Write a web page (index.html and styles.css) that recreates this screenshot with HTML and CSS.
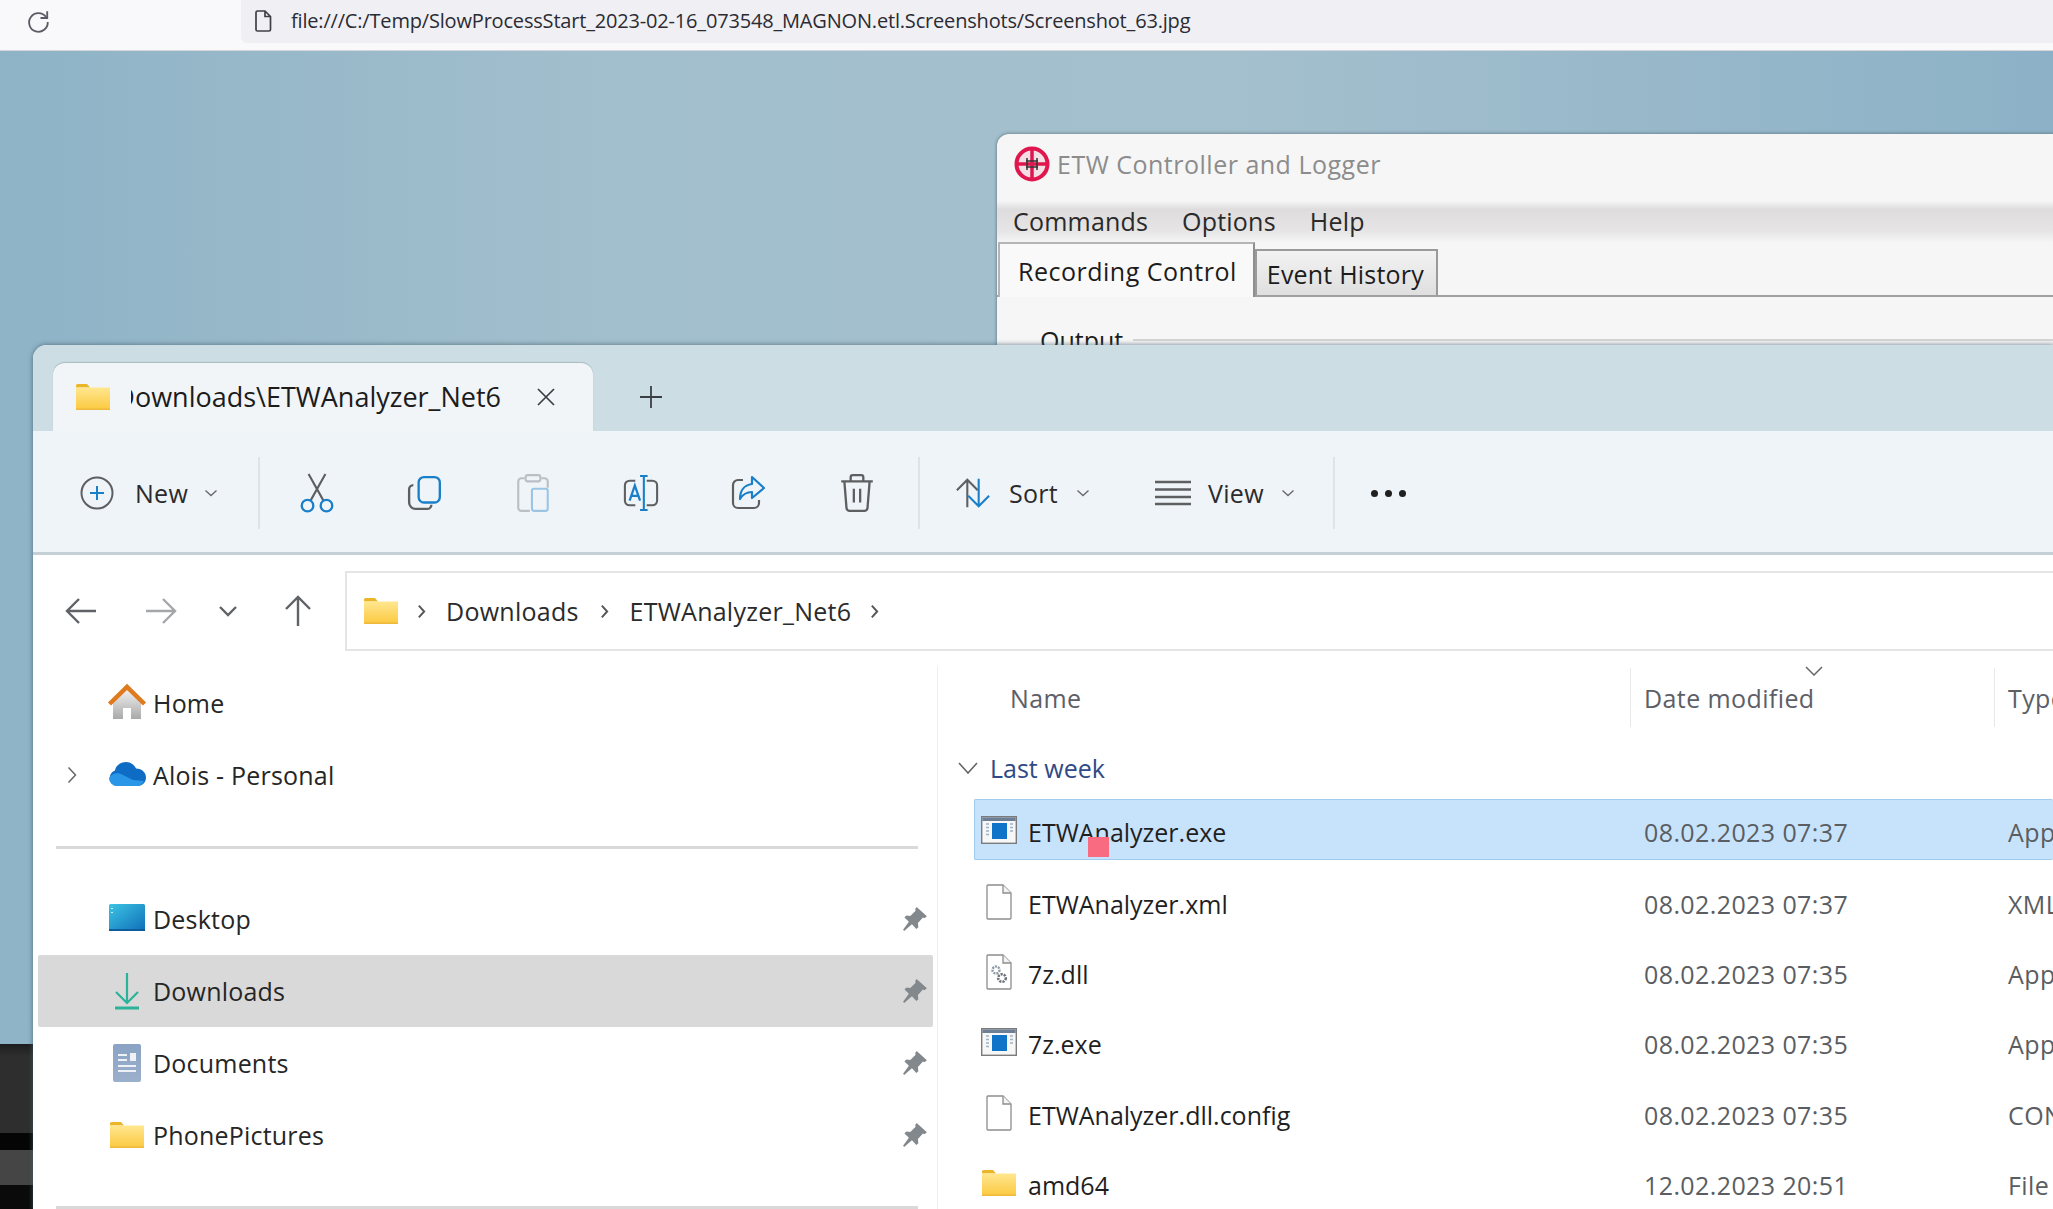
FILE: index.html
```html
<!DOCTYPE html>
<html lang="en">
<head>
<meta charset="utf-8">
<title>Screenshot_63</title>
<link rel="stylesheet" href="styles.css">
</head>
<body>
<svg class="defs" aria-hidden="true">
  <defs>
    <linearGradient id="gFolder" x1="0" y1="0" x2="0" y2="1"><stop offset="0" stop-color="#ffe68f"/><stop offset="1" stop-color="#fbc93f"/></linearGradient>
    <linearGradient id="gHouse" x1="0" y1="0" x2="0" y2="1"><stop offset="0" stop-color="#f2f2f2"/><stop offset="1" stop-color="#a9a9a9"/></linearGradient>
    <linearGradient id="gDesk" x1="0" y1="0" x2="1" y2="1"><stop offset="0" stop-color="#3cc4e4"/><stop offset="1" stop-color="#0f6fb8"/></linearGradient>
    <linearGradient id="gDoc" x1="0" y1="0" x2="0" y2="1"><stop offset="0" stop-color="#8aa3c4"/><stop offset="1" stop-color="#9bb0cc"/></linearGradient>
    <symbol id="i-folder" viewBox="0 0 34 26">
      <path d="M0 1.5A1.500 1.500 0 0 1 1.500 0H11l3 3.500H0z" fill="#eab529"/>
      <rect x="0" y="3.500" width="34" height="22.500" fill="url(#gFolder)"/>
      <rect x="0" y="24.500" width="34" height="1.500" fill="#eeb93c"/>
    </symbol>
    <symbol id="i-pin" viewBox="0 0 24 24">
      <path d="M13.500 1l9.500 8.500-2.300 1.700-1.400-.6-4.600 5.200.4 3.700-1.900 1.700-4-4.400L2 23l-1-1 5.300-7.400-4-4L4 8.800l3.600.5 5-5-.5-1.200z" fill="#83888d"/>
    </symbol>
    <symbol id="i-app" viewBox="0 0 36 28">
      <rect x=".7" y=".7" width="34.600" height="26.600" fill="#f7f7f7" stroke="#7b7b7b" stroke-width="1.400"/>
      <rect x="1.400" y="1.400" width="33.200" height="3.600" fill="#6d7f95"/>
      <rect x="11" y="7" width="15" height="16" fill="#0f74c8"/>
      <path d="M5 8h3M5 11.500h3M5 15h3M5 18.500h3M29 8h3M29 11.500h3M29 15h3" stroke="#9fb2c6" stroke-width="1.500"/>
    </symbol>
    <symbol id="i-doc" viewBox="0 0 26 36">
      <path d="M1 2a1 1 0 0 1 1-1h15l8 8v25a1 1 0 0 1-1 1H2a1 1 0 0 1-1-1z" fill="#fff" stroke="#8d8d8d" stroke-width="1.300"/>
      <path d="M17 1v8h8" fill="#f3f3f3" stroke="#8d8d8d" stroke-width="1.300"/>
    </symbol>
    <symbol id="i-dll" viewBox="0 0 26 36">
      <path d="M1 2a1 1 0 0 1 1-1h15l8 8v25a1 1 0 0 1-1 1H2a1 1 0 0 1-1-1z" fill="#fff" stroke="#8d8d8d" stroke-width="1.300"/>
      <path d="M17 1v8h8" fill="#f3f3f3" stroke="#8d8d8d" stroke-width="1.300"/>
      <circle cx="10" cy="16" r="3.500" fill="none" stroke="#8e98a4" stroke-width="2.400" stroke-dasharray="2 1"/>
      <circle cx="16" cy="24" r="3.800" fill="none" stroke="#6d747c" stroke-width="2.600" stroke-dasharray="2.200 1"/>
    </symbol>
  </defs>
</svg>

<header class="browserbar">
  <svg class="reload" viewBox="0 0 24 24"><path d="M19.500 8.500A8.600 8.600 0 1 0 21 13" fill="none" stroke="#5b5b66" stroke-width="1.700"/><path d="M20.500 3v6.200h-6.200" fill="none" stroke="#5b5b66" stroke-width="1.700"/></svg>
  <div class="urlbox">
    <svg class="urlfile" viewBox="0 0 18 22"><path d="M2 2.500A1.500 1.500 0 0 1 3.500 1H11l5.500 5.500v13a1.500 1.500 0 0 1-1.500 1.500H3.500A1.500 1.500 0 0 1 2 19.500z M11 1v5.500h5.500" fill="none" stroke="#3f3f46" stroke-width="1.700"/></svg>
    <span class="urltext">file:///C:/Temp/SlowProcessStart_2023-02-16_073548_MAGNON.etl.Screenshots/Screenshot_63.jpg</span>
  </div>
</header>

<main class="desktop">
  <div class="strip"></div>

  <section class="etw">
    <div class="etw-title">
      <svg class="etw-logo" viewBox="0 0 36 36">
        <circle cx="18" cy="18" r="15.500" fill="#f3dfe4" stroke="#e0164f" stroke-width="4"/>
        <path d="M18 3v30M3 18h30" stroke="#e0164f" stroke-width="3.500"/>
        <path d="M13 12v12M23 12v12M12 15h12M12 21h12" stroke="#333" stroke-width="1.500"/>
      </svg>
      <span>ETW Controller and Logger</span>
    </div>
    <nav class="etw-menu"><span>Commands</span><span>Options</span><span>Help</span></nav>
    <div class="etw-tabs">
      <div class="etw-tab etw-tab-on">Recording Control</div>
      <div class="etw-tab">Event History</div>
    </div>
    <div class="etw-group"><span>Output</span><i></i></div>
  </section>

  <section class="explorer">
    <div class="tabstrip">
      <div class="tab">
        <svg class="ico-folder"><use href="#i-folder"/></svg>
        <div class="tabtitle"><span>Downloads\ETWAnalyzer_Net6</span></div>
        <svg class="tabclose" viewBox="0 0 20 20"><path d="M2 2l16 16M18 2L2 18" stroke="#3a3f44" stroke-width="1.700"/></svg>
      </div>
      <svg class="tabadd" viewBox="0 0 24 24"><path d="M12 1v22M1 12h22" stroke="#3a3f44" stroke-width="1.800"/></svg>
    </div>

    <div class="toolbar">
      <div class="cmd cmd-new">
        <svg class="cmd-ico" viewBox="0 0 34 34"><circle cx="17" cy="17" r="15.500" fill="none" stroke="#5d5f61" stroke-width="2"/><path d="M17 10v14M10 17h14" stroke="#1a7fc9" stroke-width="2"/></svg>
        <span>New</span>
        <svg class="chev" viewBox="0 0 14 8"><path d="M1.500 1.500L7 6.500l5.500-5" fill="none" stroke="#6a6a6a" stroke-width="1.400"/></svg>
      </div>
      <i class="sep sep-a"></i>
      <div class="tool"><svg viewBox="0 0 34 38"><path d="M9 1l14 25M25 1L11 26" stroke="#5d5f61" stroke-width="2" fill="none"/><circle cx="8" cy="31" r="5.500" fill="none" stroke="#1a7fc9" stroke-width="2.200"/><circle cx="26" cy="31" r="5.500" fill="none" stroke="#1a7fc9" stroke-width="2.200"/></svg></div>
      <div class="tool"><svg viewBox="0 0 34 34"><path d="M6 9.500a4 4 0 0 0-4 4V26a6 6 0 0 0 6 6h11a4 4 0 0 0 4-4" fill="none" stroke="#5d5f61" stroke-width="2.200"/><rect x="11" y="2" width="20" height="24" rx="5" fill="none" stroke="#1a7fc9" stroke-width="2.200"/></svg></div>
      <div class="tool tool-off"><svg viewBox="0 0 34 38"><path d="M9 5H6a3 3 0 0 0-3 3v25a3 3 0 0 0 3 3h8M25 5h3a3 3 0 0 1 3 3v6" fill="none" stroke="#b9bfc4" stroke-width="2"/><rect x="10" y="2" width="14" height="6" rx="2" fill="none" stroke="#b9bfc4" stroke-width="2"/><rect x="16" y="15" width="15" height="21" rx="2" fill="none" stroke="#9cc5e4" stroke-width="2"/></svg></div>
      <div class="tool"><svg viewBox="0 0 38 38"><path d="M13 6H7a5 5 0 0 0-5 5v16a5 5 0 0 0 5 5h6M25 6h6a5 5 0 0 1 5 5v16a5 5 0 0 1-5 5h-6" fill="none" stroke="#5d5f61" stroke-width="2.200"/><path d="M18 1h8M18 37h8M22 1v36" stroke="#1a7fc9" stroke-width="2.200"/><path d="M7 27L12.500 11 18 27M9 22h7" fill="none" stroke="#1a7fc9" stroke-width="2.400"/></svg></div>
      <div class="tool"><svg viewBox="0 0 36 36"><path d="M12 5H7a5 5 0 0 0-5 5v18a5 5 0 0 0 5 5h16a5 5 0 0 0 5-5v-3" fill="none" stroke="#5d5f61" stroke-width="2.200"/><path d="M21 2l12 11-12 10v-6c-6 0-9 2-12 7 0-8 4-14 12-15z" fill="none" stroke="#1a7fc9" stroke-width="2.200" stroke-linejoin="round"/></svg></div>
      <div class="tool"><svg viewBox="0 0 34 38"><path d="M2 8h30M11 8V4a2 2 0 0 1 2-2h8a2 2 0 0 1 2 2v4M5 8l2 25a3 3 0 0 0 3 3h14a3 3 0 0 0 3-3l2-25M14 15v13M20 15v13" fill="none" stroke="#5d5f61" stroke-width="2.200"/></svg></div>
      <i class="sep sep-b"></i>
      <div class="cmd cmd-sort">
        <svg class="cmd-ico cmd-ico-w" viewBox="0 0 38 32"><path d="M13 31V2M2 13L13 2l11 11" fill="none" stroke="#5d5f61" stroke-width="2.200"/><path d="M25 1v29M14 19l11 11 11-11" fill="none" stroke="#1a7fc9" stroke-width="2.200"/></svg>
        <span>Sort</span>
        <svg class="chev" viewBox="0 0 14 8"><path d="M1.500 1.500L7 6.500l5.500-5" fill="none" stroke="#6a6a6a" stroke-width="1.400"/></svg>
      </div>
      <div class="cmd cmd-view">
        <svg class="cmd-ico cmd-ico-w" viewBox="0 0 36 26"><path d="M0 2h36M0 9.500h36M0 17h36M0 24h36" stroke="#5d5f61" stroke-width="2.400"/></svg>
        <span>View</span>
        <svg class="chev" viewBox="0 0 14 8"><path d="M1.500 1.500L7 6.500l5.500-5" fill="none" stroke="#6a6a6a" stroke-width="1.400"/></svg>
      </div>
      <i class="sep"></i>
      <div class="dots"><b></b><b></b><b></b></div>
    </div>

    <div class="navrow">
      <div class="navbtns">
        <svg class="nb nb-wide" viewBox="0 0 80 30"><path d="M55 15H26M38 3L26 15l12 12" fill="none" stroke="#5f6266" stroke-width="2.400"/></svg>
        <svg class="nb nb-wide" viewBox="0 0 80 30"><path d="M25 15h29M42 3l12 12-12 12" fill="none" stroke="#a4a7aa" stroke-width="2.400"/></svg>
        <svg class="nb nb-narrow" viewBox="0 0 54 30"><path d="M19 11l8 8 8-8" fill="none" stroke="#5f6266" stroke-width="2.400"/></svg>
        <svg class="nb nb-up" viewBox="0 0 86 32"><path d="M43 31V2M31 14L43 2l12 12" fill="none" stroke="#5f6266" stroke-width="2.400"/></svg>
      </div>
      <div class="address">
        <svg class="ico-folder"><use href="#i-folder"/></svg>
        <svg class="crumb crumb-a" viewBox="0 0 8 14"><path d="M1.500 1.500L6.500 7l-5 5.500" fill="none" stroke="#555" stroke-width="1.800"/></svg>
        <span>Downloads</span>
        <svg class="crumb crumb-b" viewBox="0 0 8 14"><path d="M1.500 1.500L6.500 7l-5 5.500" fill="none" stroke="#555" stroke-width="1.800"/></svg>
        <span>ETWAnalyzer_Net6</span>
        <svg class="crumb crumb-c" viewBox="0 0 8 14"><path d="M1.500 1.500L6.500 7l-5 5.500" fill="none" stroke="#555" stroke-width="1.800"/></svg>
      </div>
    </div>

    <div class="content">
      <aside class="sidebar">
        <div class="side">
          <span class="side-chev"></span>
          <svg class="side-ico" viewBox="0 0 40 40"><path d="M20 6L6 19v17h10V25h8v11h10V19z" fill="url(#gHouse)"/><path d="M2.500 21L20 4l17.500 17" fill="none" stroke="#e07a1f" stroke-width="4.500"/></svg>
          <span class="side-label">Home</span>
        </div>
        <div class="side">
          <svg class="side-chev" viewBox="0 0 10 18"><path d="M1.500 1.500L8.500 9l-7 7.500" fill="none" stroke="#666" stroke-width="1.500"/></svg>
          <svg class="side-ico" viewBox="0 0 40 40"><path d="M10 31a8 8 0 0 1-2-15.500C9 10 14 7 19 7c5 0 8.500 3 10 6.500 6 0 10 4 10 9s-4 8.500-9 8.500z" fill="#0f6cc4"/><path d="M10 31a8 8 0 0 1-8-8c3-5 9-6 14-3l10 5 11 1c-1 3-4 5-7 5z" fill="#2a96e8"/></svg>
          <span class="side-label">Alois - Personal</span>
        </div>
        <hr class="side-div">
        <div class="side">
          <span class="side-chev"></span>
          <svg class="side-ico" viewBox="0 0 40 40"><rect x="2" y="5" width="36" height="27" rx="1.500" fill="url(#gDesk)"/><path d="M5 9v1M5 13v1" stroke="#fff" stroke-width="1.500"/><rect x="2" y="30" width="36" height="2" fill="#0d5d9e"/></svg>
          <span class="side-label">Desktop</span>
          <svg class="side-pin"><use href="#i-pin"/></svg>
        </div>
        <div class="side side-on">
          <span class="side-chev"></span>
          <svg class="side-ico" viewBox="0 0 40 40"><path d="M20 2v30M9 21l11 11 11-11" fill="none" stroke="#2bb39a" stroke-width="2.200"/><path d="M8 37h24" stroke="#2bb39a" stroke-width="3"/></svg>
          <span class="side-label">Downloads</span>
          <svg class="side-pin"><use href="#i-pin"/></svg>
        </div>
        <div class="side">
          <span class="side-chev"></span>
          <svg class="side-ico" viewBox="0 0 40 40"><rect x="6" y="1" width="28" height="38" rx="2" fill="url(#gDoc)"/><path d="M11 12h9M11 17h9M11 23h18M11 28h18" stroke="#eef2f7" stroke-width="1.800"/><rect x="23" y="10" width="6" height="8" fill="#eef2f7"/></svg>
          <span class="side-label">Documents</span>
          <svg class="side-pin"><use href="#i-pin"/></svg>
        </div>
        <div class="side">
          <span class="side-chev"></span>
          <svg class="side-folder"><use href="#i-folder"/></svg>
          <span class="side-label">PhonePictures</span>
          <svg class="side-pin"><use href="#i-pin"/></svg>
        </div>
        <hr class="side-div">
      </aside>

      <div class="list">
        <div class="listhead">
          <div class="lh lh-name">Name</div>
          <div class="lh lh-col">Date modified<svg class="sortcaret" viewBox="0 0 18 10"><path d="M1 1l8 8 8-8" fill="none" stroke="#666" stroke-width="1.500"/></svg></div>
          <div class="lh lh-col">Type</div>
        </div>
        <div class="grouprow">
          <svg class="group-chev" viewBox="0 0 20 12"><path d="M1 1l9 10 9-10" fill="none" stroke="#666" stroke-width="1.600"/></svg>
          <span>Last week</span>
        </div>
        <div class="filerow">
          <div class="fileinner fileinner-on">
            <div class="fname"><svg class="fico fico-app"><use href="#i-app"/></svg><span>ETWAnalyzer.exe</span></div>
            <div class="fmeta">08.02.2023 07:37</div><div class="fmeta">Application</div>
            <i class="marker"></i>
          </div>
        </div>
        <div class="filerow"><div class="fileinner">
          <div class="fname"><svg class="fico fico-doc"><use href="#i-doc"/></svg><span>ETWAnalyzer.xml</span></div>
          <div class="fmeta">08.02.2023 07:37</div><div class="fmeta">XML File</div>
        </div></div>
        <div class="filerow"><div class="fileinner">
          <div class="fname"><svg class="fico fico-doc"><use href="#i-dll"/></svg><span>7z.dll</span></div>
          <div class="fmeta">08.02.2023 07:35</div><div class="fmeta">Application</div>
        </div></div>
        <div class="filerow"><div class="fileinner">
          <div class="fname"><svg class="fico fico-app"><use href="#i-app"/></svg><span>7z.exe</span></div>
          <div class="fmeta">08.02.2023 07:35</div><div class="fmeta">Application</div>
        </div></div>
        <div class="filerow"><div class="fileinner">
          <div class="fname"><svg class="fico fico-doc"><use href="#i-doc"/></svg><span>ETWAnalyzer.dll.config</span></div>
          <div class="fmeta">08.02.2023 07:35</div><div class="fmeta">CONFIG File</div>
        </div></div>
        <div class="filerow"><div class="fileinner">
          <div class="fname"><svg class="fico fico-folder"><use href="#i-folder"/></svg><span>amd64</span></div>
          <div class="fmeta">12.02.2023 20:51</div><div class="fmeta">File folder</div>
        </div></div>
      </div>
    </div>
  </section>
</main>
</body>
</html>
```

FILE: styles.css
```css
* { box-sizing: border-box; }
html, body { margin: 0; height: 100%; overflow: hidden; }
body {
  font-family: "Open Sans", "Noto Sans", "Liberation Sans", sans-serif;
  font-size: 25px;
  color: #1c1c1c;
  display: flex;
  flex-direction: column;
  background: #fff;
}
.defs { position: absolute; width: 0; height: 0; }

/* Browser bar */
.browserbar {
  height: 51px;
  flex: none;
  display: flex;
  align-items: flex-start;
  background: #f9f9fb;
  border-bottom: 1px solid #d4d6d8;
}
.reload { width: 26px; height: 26px; margin: 8px 0 0 25px; flex: none; }
.urlbox {
  margin-left: 190px;
  flex: 1;
  height: 43px;
  background: #f0f0f4;
  border-bottom-left-radius: 6px;
  display: flex;
  align-items: center;
  padding: 0 0 2px 13px;
}
.urlfile { width: 18px; height: 22px; flex: none; }
.urltext { margin-left: 19px; font-size: 20px; letter-spacing: -.18px; color: #2b2b33; white-space: nowrap; }

/* Desktop */
.desktop {
  position: relative;
  flex: 1;
  overflow: hidden;
  background:
    linear-gradient(90deg, rgba(140,178,198,.9) 0, rgba(160,190,204,.25) 30%, rgba(168,194,207,.2) 60%, rgba(138,176,198,.9) 100%),
    #a3bfcd;
}
.strip {
  position: absolute;
  left: 0; bottom: 0;
  width: 33px; height: 165px;
  background: linear-gradient(180deg, #1d1d1d 0, #2e2e2e 12px, #2e2e2e 89px, #050505 89px, #050505 106px, #454545 106px, #454545 141px, #0a0a0a 141px);
}

/* ETW window */
.etw {
  position: absolute;
  left: 997px; top: 83px; right: 0; height: 300px;
  background: #f6f6f6;
  border-top-left-radius: 12px;
  box-shadow: 0 0 3px 1px rgba(80,100,110,.55);
  display: flex;
  flex-direction: column;
}
.etw-title {
  height: 67px;
  display: flex;
  align-items: center;
  padding: 0 0 8px 17px;
  color: #8c8c8c;
  font-size: 25px;
  letter-spacing: .5px;
}
.etw-logo { width: 36px; height: 36px; margin-right: 7px; flex: none; }
.etw-menu {
  height: 42px;
  display: flex;
  align-items: center;
  padding: 0 0 2px 16px;
  gap: 34px;
  background: linear-gradient(180deg, #f6f6f6 0, #dedcdc 20%, #e6e4e4 70%, #f6f6f6 100%);
  color: #2a2a2a;
  letter-spacing: .2px;
}
.etw-tabs {
  height: 54px;
  display: flex;
  align-items: flex-end;
  border-bottom: 2px solid #a0a0a0;
  padding-left: 1px;
}
.etw-tab {
  height: 46px;
  padding: 2px 12px 0 10px;
  display: flex;
  align-items: center;
  background: linear-gradient(180deg, #f2f2f2, #dfdfdf);
  border: 2px solid #9a9a9a;
  border-bottom: 0;
  letter-spacing: .2px;
}
.etw-tab-on {
  height: 55px;
  padding: 1px 16px 0 18px;
  margin-bottom: -2px;
  background: #f9f9f9;
  border-color: #b5b5b5;
  border-right-color: #8e8e8e;
  letter-spacing: .5px;
}
.etw-group { display: flex; align-items: center; padding: 26px 0 0 43px; gap: 10px; }
.etw-group i { flex: 1; height: 2px; background: #d5d5d5; }

/* Explorer */
.explorer {
  position: absolute;
  left: 33px; top: 294px; right: 0; bottom: 0;
  background: #fff;
  border-top-left-radius: 14px;
  box-shadow: 0 0 4px 1px rgba(70,95,110,.6);
  display: flex;
  flex-direction: column;
  overflow: hidden;
}
.tabstrip {
  height: 86px;
  flex: none;
  background: #cddde4;
  display: flex;
  align-items: flex-end;
  padding-left: 20px;
}
.tab {
  width: 540px;
  height: 68px;
  background: #f1f5f8;
  border-radius: 12px 12px 0 0;
  box-shadow: 0 -1px 1px rgba(100,125,135,.35);
  display: flex;
  align-items: center;
  padding: 0 0 1px 23px;
  font-size: 27px;
}
.ico-folder { width: 34px; height: 26px; flex: none; }
.tabtitle {
  width: 370px;
  margin-left: 21px;
  display: flex;
  justify-content: flex-end;
  overflow: hidden;
  white-space: nowrap;
}
.tabclose { width: 20px; height: 20px; margin-left: 35px; flex: none; }
.tabadd { width: 24px; height: 24px; margin: 0 0 22px 46px; flex: none; }

.toolbar {
  height: 124px;
  flex: none;
  background: #eff4f8;
  border-bottom: 3px solid #c4d0d6;
  display: flex;
  align-items: center;
  padding: 3px 0 0 47px;
}
.cmd { display: flex; align-items: center; color: #2b2b2b; height: 100%; letter-spacing: .3px; }
.cmd-ico { width: 34px; height: 34px; flex: none; }
.cmd-ico-w { width: 36px; }
.chev { width: 14px; height: 8px; flex: none; }
.cmd-new { width: 178px; }
.cmd-new span { margin: 0 16px 0 21px; }
.cmd-sort { width: 200px; }
.cmd-sort span { margin: 0 18px 0 18px; }
.cmd-view { width: 178px; }
.cmd-view span { margin: 0 17px 0 17px; }
.sep { width: 2px; height: 72px; background: #dde3e7; flex: none; }
.sep-a { margin-right: 3px; }
.sep-b { margin: 0 35px 0 7px; }
.tool { width: 108px; height: 40px; display: flex; align-items: center; justify-content: center; flex: none; }
.tool svg { width: 36px; height: 40px; }
.dots { width: 106px; display: flex; justify-content: center; gap: 7px; flex: none; }
.dots b { width: 7px; height: 7px; border-radius: 50%; background: #202020; }

.navrow {
  height: 111px;
  flex: none;
  display: flex;
  align-items: center;
  padding-top: 1px;
}
.navbtns { width: 312px; flex: none; display: flex; align-items: center; padding-left: 8px; }
.nb { height: 32px; flex: none; }
.nb-wide { width: 80px; }
.nb-narrow { width: 54px; }
.nb-up { width: 86px; }
.address {
  flex: 1;
  height: 80px;
  border: 2px solid #e3e5e7;
  border-right: 0;
  display: flex;
  align-items: center;
  padding-left: 17px;
  color: #2b2b2b;
  letter-spacing: .25px;
}
.crumb { width: 9px; height: 15px; flex: none; }
.crumb-a { margin: 0 20px 0 19px; }
.crumb-b { margin: 0 21px; }
.crumb-c { margin-left: 19px; }

.content { flex: 1; display: grid; grid-template-columns: 905px 1fr; min-height: 0; }
.sidebar {
  padding: 1px 4px 0 5px;
  border-right: 1px solid #eceff1;
  letter-spacing: .2px;
}
.side {
  height: 72px;
  display: flex;
  align-items: center;
  padding: 0 5px 0 20px;
  border-radius: 2px;
}
.side-on { background: #d9d9d9; }
.side-chev { width: 10px; height: 18px; margin: 0 9px; flex: none; }
.side-ico { width: 40px; height: 40px; margin-left: 21px; flex: none; }
.side-folder { width: 34px; height: 28px; margin: 0 3px 0 24px; flex: none; }
.side-label { margin-left: 6px; flex: 1; color: #262626; }
.side-pin { width: 26px; height: 26px; flex: none; }
.side-div { margin: 35px 15px 34px 18px; border: 0; height: 3px; background: #d9d9d9; }
.side-div:last-child { margin-bottom: 0; }

.list { padding-top: 2px; min-width: 0; overflow: hidden; }
.listhead {
  height: 59px;
  display: grid;
  grid-template-columns: 692px 364px 1fr;
  color: #5c6066;
  letter-spacing: .4px;
}
.lh { display: flex; align-items: center; white-space: nowrap; }
.lh-name { padding-left: 72px; }
.lh-col { padding-left: 13px; border-left: 1px solid #e6e8ea; position: relative; }
.sortcaret { position: absolute; left: 174px; top: -2px; width: 18px; height: 10px; }
.grouprow {
  height: 70px;
  padding: 11px 0 0 20px;
  display: flex;
  align-items: center;
  gap: 12px;
  color: #2f4a86;
}
.group-chev { width: 20px; height: 12px; flex: none; }
.filerow { height: 70.4px; display: flex; align-items: center; padding-left: 36px; }
.fileinner {
  position: relative;
  width: 100%;
  height: 60px;
  display: grid;
  grid-template-columns: 656px 364px 1fr;
  align-items: center;
  margin-top: 2px;
  white-space: nowrap;
}
.fileinner-on {
  height: 61px;
  background: #c7e3fb;
  border: 1px solid #9fcbed;
  border-right: 0;
  border-radius: 2px;
  margin-top: -5px;
  padding-top: 5px;
}
.fname { display: flex; align-items: center; padding-left: 8px; color: #1f1f1f; }
.fileinner-on .fname { padding-left: 7px; }
.fname span { margin-left: 12px; }
.fico { flex: none; }
.fico-app { width: 36px; height: 28px; margin: -4px -1px 0 -1px; }
.fico-doc { width: 26px; height: 36px; margin: -4px 4px 0 4px; }
.fico-folder { width: 34px; height: 28px; margin-top: -4px; }
.fmeta { padding-left: 14px; color: #5a5d61; letter-spacing: .4px; }
.fileinner-on .fmeta { margin-left: -1px; }
.marker {
  position: absolute;
  left: 113px; top: 37px;
  width: 21px; height: 20px;
  background: #f96b80;
}
```
